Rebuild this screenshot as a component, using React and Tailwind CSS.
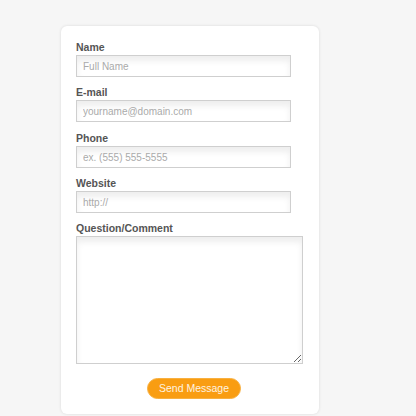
import React from 'react';

const fields = [
  { label: 'Name', placeholder: 'Full Name', gap: 'mb-[8px]' },
  { label: 'E-mail', placeholder: 'yourname@domain.com', gap: 'mb-[9px]' },
  { label: 'Phone', placeholder: 'ex. (555) 555-5555', gap: 'mb-[8px]' },
  { label: 'Website', placeholder: 'http://', gap: 'mb-[8px]' },
];

const inputClass =
  'block w-[215px] h-[22px] border border-[#cfcfcf] bg-white px-[6px] text-[10px] text-[#555] placeholder:text-[#aaa] outline-none shadow-[inset_0_5px_6px_rgba(0,0,0,0.07)]';

export default function App() {
  return (
    <div className="min-h-screen bg-[#f6f6f6] pt-[26px]" style={{ fontFamily: '"Liberation Sans", Arial, sans-serif' }}>
      <form
        className="ml-[61px] w-[258px] rounded-[6px] bg-white px-[15px] pt-[14px] pb-[15px] shadow-[0_0_3px_rgba(0,0,0,0.12)]"
        onSubmit={(e) => e.preventDefault()}
      >
        {fields.map((f) => (
          <div key={f.label} className={f.gap}>
            <label className="block h-[15px] text-[10.5px] leading-[15px] font-bold text-[#555]">{f.label}</label>
            <input type="text" placeholder={f.placeholder} className={inputClass} />
          </div>
        ))}

        <label className="block h-[15px] text-[10.5px] leading-[15px] font-bold text-[#555]">Question/Comment</label>
        <textarea className="block w-[227px] h-[128px] border border-[#cfcfcf] bg-white px-[6px] py-[4px] text-[10px] text-[#555] outline-none shadow-[inset_0_5px_6px_rgba(0,0,0,0.07)]" />

        <div className="mt-[14px] flex justify-center">
          <button
            type="submit"
            className="ml-[8px] h-[21px] w-[94px] rounded-full border border-[#f8b040] bg-[#f99d12] text-[10.5px] leading-[19px] text-[#fff3e0]"
          >
            Send Message
          </button>
        </div>
      </form>
    </div>
  );
}
